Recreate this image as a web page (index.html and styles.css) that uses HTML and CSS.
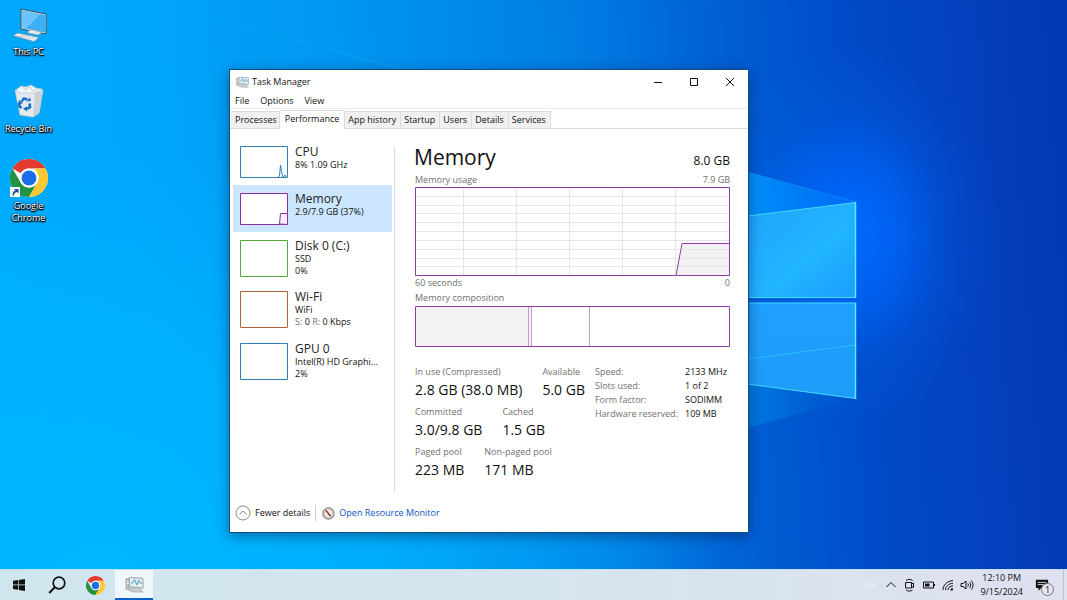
FILE: index.html
```html
<!DOCTYPE html>
<html lang="en">
<head>
<meta charset="utf-8">
<title>Task Manager</title>
<link rel="stylesheet" href="styles.css">
</head>
<body>
<svg width="0" height="0" class="defs" aria-hidden="true">
  <symbol id="chrome" viewBox="0 0 48 48">
    <circle cx="24" cy="24" r="24" fill="#fff"/>
    <path d="M3.2 12A24 24 0 0 1 44.8 12H24A12 12 0 0 0 13.6 18Z" fill="#e33b2e"/>
    <path d="M3.2 12A24 24 0 0 0 24 48L34.4 30A12 12 0 0 1 13.6 30Z" fill="#229342"/>
    <path d="M44.8 12A24 24 0 0 1 24 48L34.4 30A12 12 0 0 0 34.4 18L31 12Z" fill="#fcc934"/>
    <circle cx="24" cy="24" r="12" fill="#fff"/>
    <circle cx="24" cy="24" r="9.4" fill="#1a6fe8"/>
  </symbol>
  <symbol id="taskmgr" viewBox="0 0 20 18">
    <path d="M1 3h3v11H1z" fill="#c3c7ca" stroke="#8d9498" stroke-width=".8"/>
    <path d="M4.500 1.500L19 2.500V13L4.500 11.500z" fill="#e4eff4" stroke="#959ca1"/>
    <path d="M6 7.500h2l2-4 2.500 6 2-5 1.500 3h2" fill="none" stroke="#4a9cc4"/>
    <path d="M7 12h8l1 2 3 3H9l-5-2z" fill="#c9cdd0" stroke="#959ca1" stroke-width=".7"/>
    <path d="M2 6h2M2 8h2" stroke="#fff"/>
  </symbol>
</svg>

<div class="screen">
  <main class="desktop">
    <svg class="wallpaper" viewBox="0 0 1067 569" preserveAspectRatio="none" aria-hidden="true">
      <defs>
        <linearGradient id="pane" x1="0" y1="0" x2="1" y2="1"><stop offset="0" stop-color="#20a4ff"/><stop offset=".6" stop-color="#21b4ff"/><stop offset="1" stop-color="#1c9dff"/></linearGradient>
        <linearGradient id="pane2" x1="0" y1="0" x2="0" y2="1"><stop offset="0" stop-color="#1f9fff"/><stop offset="1" stop-color="#209cf8"/></linearGradient>
        <linearGradient id="beam" x1="0" y1="0" x2="1" y2="0"><stop offset="0" stop-color="#009cff" stop-opacity=".9"/><stop offset="1" stop-color="#0080ff" stop-opacity=".3"/></linearGradient>
        <linearGradient id="beam2" x1="0" y1="0" x2="1" y2="0"><stop offset="0" stop-color="#0090ea" stop-opacity=".6"/><stop offset="1" stop-color="#0070e0" stop-opacity="0"/></linearGradient>
        <linearGradient id="ray" x1="0" y1="0" x2="1" y2="0"><stop offset="0" stop-color="#28b4ff" stop-opacity="0"/><stop offset="1" stop-color="#28b4ff" stop-opacity=".45"/></linearGradient>
      </defs>
      <path d="M155 0L400 69" stroke="url(#ray)"/>
      <path d="M40 434L230 404" stroke="url(#ray)" opacity=".5"/>
      <path d="M740 170L856 202 740 217Z" fill="url(#beam)"/>
      <path d="M740 170L856 202" stroke="#20a5ff" stroke-opacity=".4"/>
      <path d="M740 383L856 398 740 430Z" fill="url(#beam2)"/>
      <path d="M740 217L855.500 202.500V297.500H740Z" fill="url(#pane)" stroke="#43dcff"/>
      <path d="M740 303H855.500V398.500L740 383Z" fill="url(#pane2)" stroke="#43dcff"/>
      <path d="M740 360L855 345" stroke="#28beff"/>
      <path d="M855.500 202V298M855.500 303V399" stroke="#52efff" stroke-width="1.500"/>
    </svg>

    <nav class="shortcuts" aria-label="Desktop">
      <button class="shortcut">
        <svg width="38" height="38" viewBox="0 0 38 38" aria-hidden="true">
          <path d="M11 4l25 5v20L11 24z" fill="#d6e3e9" stroke="#37515f"/>
          <path d="M12 5.500L35 10V27.500L12 23z" fill="#3eb0f5"/>
          <path d="M12 5.500L30 9.200 16 23.500l-4-.7z" fill="#6cc4ff"/>
          <path d="M18 26l4-1.500 10 3-4 2.500-10-2z" fill="#e3e9ec" stroke="#7d929d" stroke-width=".6"/>
          <path d="M3 30.500L8 28l21 4.500-5 4z" fill="#eef2f4" stroke="#7d929d" stroke-width=".7"/>
          <path d="M7 30.500l17 3.500M10 29.500l16 3.300" stroke="#b9c4ca" stroke-width=".6"/>
        </svg>
        <span>This PC</span>
      </button>
      <button class="shortcut">
        <svg width="38" height="38" viewBox="0 0 38 38" aria-hidden="true">
          <path d="M6 8l5-4 5 1 5-2 5 3 6 1-2 5H8z" fill="#f1f4f6" stroke="#b4c0c7" stroke-width=".7"/>
          <path d="M12 4l3 4 5-3 3 4 5-2" fill="none" stroke="#c2ccd2"/>
          <path d="M5 8l6 3h13l9-3-4 23-6 4-13-2z" fill="#e4e9ed" stroke="#c0cbd2" stroke-width=".8"/>
          <path d="M25 11l8-3-4 23-6 4z" fill="#c9d2d8"/>
          <path d="M11.500 19.500l2.500-3 3.500 1M19.500 21.500l.500 3.500-3 2M11.500 26l-2.500-2 1-3.500" fill="none" stroke="#1670c9" stroke-width="2.600"/>
          <path d="M16.500 19.500l4.500-.5-1-3.500zM17 24.500v5l-4-3zM7.500 22l2-4 3.500 3.500z" fill="#1670c9"/>
        </svg>
        <span>Recycle Bin</span>
      </button>
      <button class="shortcut">
        <svg width="38" height="38" viewBox="0 0 38 38" aria-hidden="true">
          <use href="#chrome" width="38" height="38"/>
          <path d="M0 28h10v10H0z" fill="#fff"/>
          <path d="M2.500 36.500c0-3 1-4.500 3-5L4 30h4.500v4.500L7 33c-2 .5-3 1.500-3 3.500z" fill="#1e4e9d"/>
        </svg>
        <span>Google Chrome</span>
      </button>
    </nav>

    <section class="window" aria-label="Task Manager">
      <header class="titlebar">
        <svg width="13" height="12" aria-hidden="true"><use href="#taskmgr"/></svg>
        <h1>Task Manager</h1>
        <div class="controls">
          <button aria-label="Minimize"><svg width="10" height="10" viewBox="0 0 10 10"><path d="M1 5.500h8" class="line"/></svg></button>
          <button aria-label="Maximize"><svg width="10" height="10" viewBox="0 0 10 10"><path d="M1.500 1.500h7v7h-7z" class="line"/></svg></button>
          <button aria-label="Close"><svg width="10" height="10" viewBox="0 0 10 10"><path d="M1 1l8 8M9 1l-8 8" class="line"/></svg></button>
        </div>
      </header>
      <nav class="menu" aria-label="Menu">
        <button>File</button><button>Options</button><button>View</button>
      </nav>
      <div class="tabs" role="tablist">
        <button role="tab">Processes</button>
        <button role="tab" class="active" aria-selected="true">Performance</button>
        <button role="tab">App history</button>
        <button role="tab">Startup</button>
        <button role="tab">Users</button>
        <button role="tab">Details</button>
        <button role="tab">Services</button>
      </div>

      <div class="body">
        <aside class="resources">
          <button class="resource">
            <svg class="mini cpu" viewBox="0 0 48 32"><path d="M.5.5h47v31H.500z"/><path d="M38 31l1.500-1 1-11 1.500 9 1 3 2-2 1 2"/></svg>
            <span class="info"><b>CPU</b><span>8% 1.09 GHz</span></span>
          </button>
          <button class="resource selected" aria-current="true">
            <svg class="mini mem" viewBox="0 0 48 32"><path d="M.5.5h47v31H.500z"/><path d="M39.500 31l1-10.500h7v11z" class="tint"/></svg>
            <span class="info"><b>Memory</b><span>2.9/7.9 GB (37%)</span></span>
          </button>
          <button class="resource">
            <svg class="mini tall disk" viewBox="0 0 48 37"><path d="M.5.5h47v36H.500z"/></svg>
            <span class="info"><b>Disk 0 (C:)</b><span>SSD</span><span>0%</span></span>
          </button>
          <button class="resource">
            <svg class="mini tall wifi" viewBox="0 0 48 37"><path d="M.5.5h47v36H.500z"/></svg>
            <span class="info"><b>Wi-Fi</b><span>WiFi</span><span><i>S:</i> 0 <i>R:</i> 0 Kbps</span></span>
          </button>
          <button class="resource">
            <svg class="mini tall cpu" viewBox="0 0 48 37"><path d="M.5.5h47v36H.500z"/><path d="M40 36.500h5"/></svg>
            <span class="info"><b>GPU 0</b><span>Intel(R) HD Graphi...</span><span>2%</span></span>
          </button>
        </aside>

        <div class="detail">
          <div class="heading"><h2>Memory</h2><span>8.0 GB</span></div>
          <div class="caption"><span>Memory usage</span><span>7.9 GB</span></div>
          <svg class="usage" viewBox="0 0 315 89" preserveAspectRatio="none" role="img" aria-label="Memory usage">
            <path class="area" d="M261 88.500L267 56.500H314.500V88.500Z"/>
            <path class="grid" d="M48.500 1V88M101.500 1V88M154.500 1V88M207.500 1V88M260.500 1V88M1 9.500H314M1 18.500H314M1 26.500H314M1 35.500H314M1 44.500H314M1 53.500H314M1 62.500H314M1 71.500H314M1 79.500H314"/>
            <path class="trace" d="M261 88.500L267 56.500H314.500M.5.5H314.500V88.500H.500Z"/>
          </svg>
          <div class="caption axis"><span>60 seconds</span><span>0</span></div>
          <div class="caption composition-title"><span>Memory composition</span></div>
          <svg class="composition" viewBox="0 0 315 41" preserveAspectRatio="none" role="img" aria-label="Memory composition">
            <path class="area" d="M1 1H116V40H1Z"/>
            <path class="split" d="M113.500 1V40M116.500 1V40M174.500 1V40"/>
            <path class="trace" d="M.5.5H314.500V40.500H.500Z"/>
          </svg>
          <div class="stats">
            <div class="figures">
              <dl><div><dt>In use (Compressed)</dt><dd>2.8 GB (38.0 MB)</dd></div><div><dt>Available</dt><dd>5.0 GB</dd></div></dl>
              <dl><div><dt>Committed</dt><dd>3.0/9.8 GB</dd></div><div><dt>Cached</dt><dd>1.5 GB</dd></div></dl>
              <dl><div><dt>Paged pool</dt><dd>223 MB</dd></div><div><dt>Non-paged pool</dt><dd>171 MB</dd></div></dl>
            </div>
            <table class="specs">
              <tr><th scope="row">Speed:</th><td>2133 MHz</td></tr>
              <tr><th scope="row">Slots used:</th><td>1 of 2</td></tr>
              <tr><th scope="row">Form factor:</th><td>SODIMM</td></tr>
              <tr><th scope="row">Hardware reserved:</th><td>109 MB</td></tr>
            </table>
          </div>
        </div>
      </div>

      <footer class="foot">
        <button class="fewer">
          <svg width="16" height="16" viewBox="0 0 16 16" aria-hidden="true"><circle cx="8" cy="8" r="7" fill="none" stroke="#888"/><path d="M4.500 9.500L8 6l3.500 3.500" fill="none" stroke="#888"/></svg>
          Fewer details
        </button>
        <a class="monitor" href="#">
          <svg width="13" height="13" viewBox="0 0 14 14" aria-hidden="true"><circle cx="7" cy="7" r="6" fill="#f4efec" stroke="#7d7d7d" stroke-width="1.300"/><circle cx="7" cy="7" r="4.300" fill="none" stroke="#d2b8b3"/><path d="M4 3.500l5 6" stroke="#b32626" stroke-width="1.500"/><path d="M7 7l2 3" stroke="#552323"/></svg>
          Open Resource Monitor
        </a>
      </footer>
    </section>
  </main>

  <footer class="taskbar">
    <button class="app" aria-label="Start"><svg width="14" height="14" viewBox="0 0 14 14"><path d="M1 2.800l5-.7v4.400H1zM6.700 2L13 1v5.500H6.700zM1 7.200h5v4.500l-5-.7zM6.700 7.200H13V13l-6.300-1z" fill="#111"/></svg></button>
    <button class="app" aria-label="Search"><svg width="18" height="18" viewBox="0 0 18 18"><circle cx="11" cy="7" r="5.800" fill="none" stroke="#111" stroke-width="1.700"/><path d="M6.800 11.300L1.200 17" stroke="#111" stroke-width="2"/></svg></button>
    <button class="app" aria-label="Google Chrome"><svg width="19" height="19"><use href="#chrome"/></svg></button>
    <button class="app open" aria-label="Task Manager"><svg width="19" height="17"><use href="#taskmgr"/></svg></button>
    <div class="tray">
      <span class="lang">EN</span>
      <button aria-label="Show hidden icons"><svg width="14" height="14" viewBox="0 0 14 14"><path d="M2.500 9L7 4.500 11.500 9" class="line"/></svg></button>
      <button aria-label="Meet now"><svg width="14" height="14" viewBox="0 0 14 14"><path d="M2.500 4.500h6v5.500h-6zM8.500 6l2-1v4.500l-2-1M3 2.500c2-1.500 4.500-1.500 6.500 0M3 12c2 1.500 4.500 1.500 6.500 0" class="line"/></svg></button>
      <button aria-label="Battery"><svg width="14" height="14" viewBox="0 0 14 14"><path d="M1.500 4h10v6h-10zM12.500 6v2" class="line"/><path d="M3 5.500h4.500v3H3z" fill="#111"/></svg></button>
      <button aria-label="Wi-Fi"><svg width="14" height="14" viewBox="0 0 14 14"><path d="M2 12C2 7 6 3 12 2.500M4.500 12C4.500 8.500 7.500 5.500 12 5.200M7 12c0-2.300 2-4 5-4.200" class="line"/><path d="M9.300 12.500c0-1.500 1-2.300 2.500-2.400v2.400z" fill="#111"/></svg></button>
      <button aria-label="Volume"><svg width="14" height="14" viewBox="0 0 14 14"><path d="M1 5.500h2L6 3v8L3 8.500H1zM7.800 5.500c.8 1 .8 2 0 3M9.600 4c1.500 2 1.500 4 0 6M11.300 2.500c2.300 3 2.300 6 0 9" class="line"/></svg></button>
      <time class="clock" datetime="2024-09-15T12:10"><span>12:10 PM</span><span>9/15/2024</span></time>
      <button class="notice" aria-label="Notifications">
        <svg width="14" height="14" viewBox="0 0 16 16"><path d="M1 2h14v9.500H7L4 14.500v-3H1z" fill="#111"/><path d="M3 5h10M3 7.500h10" stroke="#dfe3ee"/></svg>
        <span class="badge">1</span>
      </button>
    </div>
    <button class="peek" aria-label="Show desktop"></button>
  </footer>
</div>
</body>
</html>
```
FILE: styles.css
```css
* { box-sizing: border-box; }
body { margin: 0; font: 9px/12px "Open Sans", "Noto Sans", sans-serif; color: #111; }
button { font: inherit; color: inherit; background: none; border: 0; padding: 0; white-space: nowrap; }
svg { display: block; flex: none; }
h1, h2, dl, dd { margin: 0; font-weight: 400; }
b, th { font-weight: 400; }
i { font-style: normal; color: #777; }
.defs { position: absolute; }
.line { fill: none; stroke: #111; stroke-width: 1; }

.screen { display: flex; flex-direction: column; min-height: 100vh; }
.desktop {
  position: relative;
  flex: 1;
  overflow: hidden;
  background:
    radial-gradient(ellipse 150px 190px at 850px 235px, #006aff, rgba(0, 104, 255, .75) 30%, rgba(0, 98, 240, .25) 65%, rgba(0, 90, 230, 0) 100%),
    radial-gradient(ellipse 620px 420px at 100px 569px, #00b6ff, rgba(0, 182, 255, .7) 45%, rgba(0, 182, 255, 0) 100%),
    linear-gradient(86deg, #00aafd 0%, #00a6fb 16%, #0092ee 38%, #007ee4 55%, #0060d4 68%, #004cc8 79%, #0440bd 90%, #0338b4 100%);
}
.wallpaper { position: absolute; inset: 0; width: 100%; height: 100%; }

.shortcuts { position: relative; display: flex; flex-direction: column; align-items: flex-start; gap: 24px; padding-top: 5px; }
.shortcut { display: flex; flex-direction: column; align-items: center; gap: 3px; width: 57px; color: #fff; text-shadow: 0 1px 1px #000, 0 0 2px #000, 1px 1px 1px #000, 0 1px 2px #000; }
.shortcut span { max-width: 54px; white-space: normal; }

.window {
  position: absolute;
  top: 69px;
  left: 229px;
  right: 318px;
  min-width: 520px;
  background: #fff;
  border: 1px solid #0d4f86;
  box-shadow: 0 3px 12px rgba(0, 20, 60, .45);
}
.titlebar { display: flex; align-items: center; gap: 3px; height: 24px; padding-left: 6px; }
.titlebar h1 { flex: 1; font-size: 9px; }
.controls { display: flex; }
.controls button { display: grid; place-items: center; width: 36px; height: 24px; }
.menu { display: flex; gap: 11px; height: 15px; padding: 0 5px; border-bottom: 1px solid #eee; }
.tabs { display: flex; align-items: flex-end; height: 20px; padding-left: 1px; border-bottom: 1px solid #dcdcdc; }
.tabs button { height: 17px; padding: 0 4px 0 3px; background: #f0f0f0; border: 1px solid #dcdcdc; border-width: 1px 1px 0 0; }
.tabs button:first-child { padding: 0 2px 0 4px; }
.tabs .active { height: 19px; margin-bottom: -1px; padding: 0 5px 2px; background: #fff; }

.body { display: flex; padding: 9px 18px 0 3px; }
.resources { flex: none; width: 159px; }
.resource { display: flex; align-items: flex-start; gap: 7px; width: 100%; min-height: 47px; padding: 7px 7px 0; text-align: left; }
.resource:nth-child(3) { min-height: 51px; }
.resource:nth-child(n+4) { min-height: 52px; }
.selected { background: #cde6ff; }
.mini { width: 48px; height: 32px; margin-top: 1px; fill: #fff; stroke-width: 1; }
.mini.tall { height: 37px; }
.cpu { stroke: #2f7fb8; }
.mem { stroke: #8b2fa8; }
.disk { stroke: #55a83a; }
.wifi { stroke: #b0623f; }
.tint { fill: #f4f0f6; }
.info { display: flex; flex-direction: column; }
.info b { font-size: 12px; line-height: 14px; color: #222; }

.detail { flex: 1; margin: 8px 0 0 2px; padding-left: 20px; border-left: 1px solid #dcdcdc; min-height: 346px; }
.heading { display: flex; justify-content: space-between; align-items: baseline; margin-top: -3px; }
.heading h2 { font-size: 21px; line-height: 28px; margin-left: -1px; }
.heading span { font-size: 12px; }
.caption { display: flex; justify-content: space-between; color: #707070; margin-top: 3px; }
.axis { margin-top: 1px; }
.usage, .composition { width: 100%; height: 89px; fill: none; }
.usage { margin-top: 1px; }
.composition { height: 41px; margin-top: 2px; }
.area { fill: #f4f1f5; }
.grid { stroke: #e9e3ec; }
.split { stroke: #c39bd0; }
.trace { stroke: #8f3ca8; }
.stats { display: flex; gap: 10px; margin-top: 19px; }
.figures { display: grid; gap: 4px; }
.figures dl { display: flex; gap: 20px; white-space: nowrap; }
.figures dt { color: #707070; }
.figures dd { font-size: 14px; line-height: 24px; }
.specs { flex: none; align-self: flex-start; border-collapse: collapse; margin-top: -1px; white-space: nowrap; }
.specs th, .specs td { padding: 0; line-height: 14px; text-align: left; }
.specs th { padding-right: 7px; color: #707070; }

.foot { display: flex; align-items: center; height: 40px; padding: 2px 5px 0; }
.foot button, .foot a { display: flex; align-items: center; gap: 4px; }
.fewer { padding-right: 5px; border-right: 1px solid #ccc; }
.monitor { padding-left: 6px; color: #0a55c4; text-decoration: none; }

.taskbar { display: flex; height: 31px; border-top: 1px solid #c4e2f0; background: linear-gradient(90deg, #d0e6ee, #d5e5f0 50%, #dfe0f0); }
.app { display: grid; place-items: center; width: 38px; height: 30px; }
.app.open { margin-left: 1px; background: #f0f7fb; border-bottom: 2px solid #0a63c9; }
.tray { display: flex; align-items: center; gap: 5px; margin-left: auto; padding-right: 14px; }
.lang { color: #eef2f8; margin-right: 3px; }
.clock { display: flex; flex-direction: column; align-items: center; margin-left: 1px; line-height: 14px; }
.notice { position: relative; margin-left: 7px; }
.badge { position: absolute; left: 6px; top: 5px; width: 13px; height: 13px; border: 1px solid #777; border-radius: 50%; background: #e3e4ee; line-height: 11px; text-align: center; }
.peek { width: 4px; border-left: 1px solid #b9c0cf; }
```
